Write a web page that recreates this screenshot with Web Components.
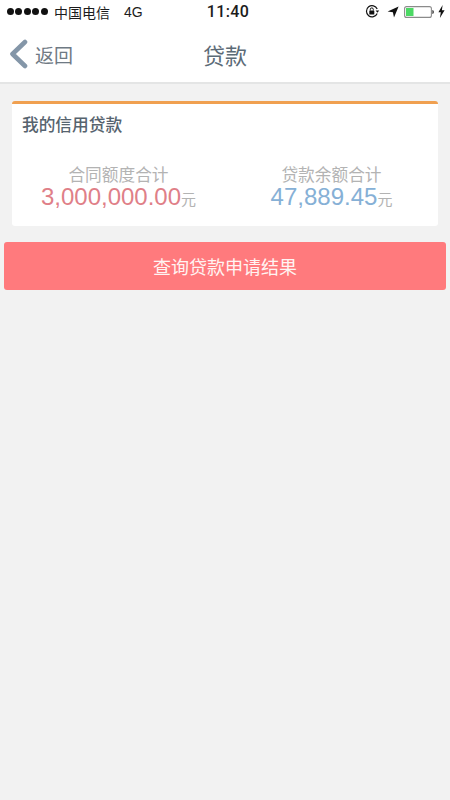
<!DOCTYPE html>
<html lang="zh">
<head>
<meta charset="utf-8">
<title>贷款</title>
<style>
html, body { margin: 0; padding: 0; height: 100%; background: #f2f2f2; }
body { font-family: "Liberation Sans", "Noto Sans CJK SC", sans-serif; overflow: hidden; }
</style>
</head>
<body>
<app-status-bar></app-status-bar>
<app-nav-bar title="贷款" back="返回"></app-nav-bar>
<credit-card heading="我的信用贷款">
  <credit-stat label="合同额度合计" value="3,000,000.00" color="#df7f88"></credit-stat>
  <credit-stat label="贷款余额合计" value="47,889.45" color="#86b0d6"></credit-stat>
</credit-card>
<query-button>查询贷款申请结果</query-button>

<script>
class AppStatusBar extends HTMLElement {
    connectedCallback() {
        const sd = this.attachShadow({ mode: 'open' });
        sd.innerHTML = `<style>
        :host { display: flex; align-items: center; box-sizing: border-box; height: 26px; padding: 0 5px 3px 7px; background: #fff; color: #1c1c1c; font-size: 14px; }
        .left, .right { flex: 1; display: flex; align-items: center; }
        .right { justify-content: flex-end; }
        .dots { display: flex; gap: 1.4px; margin-right: 6.4px; }
        .dots i { width: 7px; height: 7px; border-radius: 50%; background: #111; }
        .net { margin-left: 14px; }
        .time { font-family: Roboto, "Liberation Sans", sans-serif; font-size: 16px; font-weight: 500; padding-left: 4px; letter-spacing: .4px; }
        svg { display: block; }
        </style>
        <div class="left">
          <div class="dots"><i></i><i></i><i></i><i></i><i></i></div>
          <span>中国电信</span><span class="net">4G</span>
        </div>
        <span class="time">11:40</span>
        <div class="right">
          <svg width="15" height="15" viewBox="0 0 15 15" style="margin-right:7px">
            <path d="M12.2 9.5A5.6 5.6 0 1 1 12.2 5" fill="none" stroke="#111" stroke-width="1.2"/>
            <path d="M10.6 6.6h3.6l-1.8 2.2z" fill="#111"/>
            <rect x="4.3" y="6.5" width="5" height="4" rx=".6" fill="#111"/>
            <path d="M5.3 6.5V5.4a1.5 1.5 0 0 1 3 0v1.1" fill="none" stroke="#111" stroke-width="1"/>
          </svg>
          <svg width="12" height="12" viewBox="0 0 12 12" style="margin-right:5px">
            <path d="M11.6.6 7 11.4 5.9 6.3.6 5.4z" fill="#111"/>
          </svg>
          <svg width="30" height="12" viewBox="0 0 30 12" style="margin-right:4px">
            <rect x=".6" y=".6" width="26.8" height="10.8" rx="2" fill="#fff" stroke="#8b8b8b" stroke-width="1.1"/>
            <rect x="2" y="2" width="7.5" height="8" fill="#4cd964"/>
            <path d="M28.4 4c1.1.3 1.4 1.1 1.4 2s-.3 1.7-1.4 2z" fill="#333"/>
          </svg>
          <svg width="7" height="13" viewBox="0 0 7 13">
            <path d="M4.6 0 .4 7.2h2.4L1.9 13l4.7-7.8H3.9z" fill="#111"/>
          </svg>
        </div>`;
    }
}
customElements.define('app-status-bar', AppStatusBar);

class AppNavBar extends HTMLElement {
    connectedCallback() {
        const sd = this.attachShadow({ mode: 'open' });
        sd.innerHTML = `<style>
        :host { display: flex; align-items: center; height: 56px; background: #fff; border-bottom: 2px solid #e4e5e5; position: relative; color: #5c6b77; }
        .back { display: flex; align-items: center; padding-left: 9px; color: #6f7a84; font-size: 19px; }
        svg { display: block; margin-right: 7px; }
        .title { position: absolute; left: 0; right: 0; text-align: center; font-size: 22px; pointer-events: none; }
        </style>
        <div class="back">
          <svg width="19" height="30" viewBox="0 0 19 30"><path d="M16 3 3.5 15 16 27" fill="none" stroke="#8496a8" stroke-width="4.6" stroke-linecap="round" stroke-linejoin="round"/></svg>
          <span>${this.getAttribute('back')}</span>
        </div>
        <div class="title">${this.getAttribute('title')}</div>`;
    }
}
customElements.define('app-nav-bar', AppNavBar);

class CreditCard extends HTMLElement {
    connectedCallback() {
        const sd = this.attachShadow({ mode: 'open' });
        sd.innerHTML = `<style>
        :host { display: block; margin: 17px 12px 0; height: 125px; box-sizing: border-box; background: #fff; border-top: 3px solid #f0a050; border-radius: 3px; padding-top: 10px; }
        h2 { margin: 0; padding-left: 10px; font-size: 16.7px; line-height: 24px; font-weight: 500; color: #56636e; }
        .row { display: grid; grid-template-columns: 1fr 1fr; margin-top: 28px; }
        </style>
        <h2>${this.getAttribute('heading')}</h2>
        <div class="row"><slot></slot></div>`;
    }
}
customElements.define('credit-card', CreditCard);

class CreditStat extends HTMLElement {
    connectedCallback() {
        const sd = this.attachShadow({ mode: 'open' });
        sd.innerHTML = `<style>
        :host { display: block; text-align: center; color: #b3b3b3; }
        .label { font-size: 16.7px; line-height: 20px; }
        .value { line-height: 22px; white-space: nowrap; font-size: 15px; }
        b { font-weight: 400; font-size: 24px; color: ${this.getAttribute('color')}; }
        </style>
        <div class="label">${this.getAttribute('label')}</div>
        <div class="value"><b>${this.getAttribute('value')}</b>元</div>`;
    }
}
customElements.define('credit-stat', CreditStat);

class QueryButton extends HTMLElement {
    connectedCallback() {
        const sd = this.attachShadow({ mode: 'open' });
        sd.innerHTML = `<style>
        :host { display: flex; align-items: center; justify-content: center; margin: 16px 4px 0; height: 48px; background: #ff7a7d; border-radius: 3px; color: #fff4f2; font-size: 18px; }
        </style>
        <slot></slot>`;
    }
}
customElements.define('query-button', QueryButton);
</script>
</body>
</html>
